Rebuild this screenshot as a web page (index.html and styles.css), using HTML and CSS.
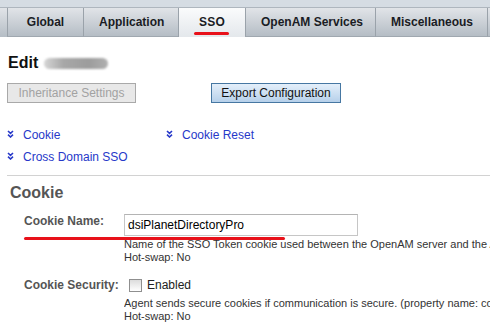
FILE: index.html
```html
<!DOCTYPE html>
<html lang="en">
<head>
    <meta charset="UTF-8">
    <meta name="viewport" content="width=device-width, initial-scale=1.0">
    <title>Edit Realm - SSO</title>
    <link rel="stylesheet" href="styles.css">
</head>
<body>
    <div class="tabbar">
        <ul class="tabs">
            <li class="tab tab-global">Global</li>
            <li class="tab tab-app">Application</li>
            <li class="tab tab-sso selected">SSO<span class="mark-tab"></span></li>
            <li class="tab tab-services">OpenAM Services</li>
            <li class="tab tab-misc">Miscellaneous</li>
            <li class="tab tab-more"></li>
        </ul>
    </div>

    <h1 class="page-title">Edit <span class="blurred"></span></h1>

    <div class="toolbar">
        <button class="btn btn-disabled" disabled>Inheritance Settings</button>
        <button class="btn btn-primary">Export Configuration</button>
    </div>

    <div class="jump-links">
        <a class="jump" href="#cookie">
            <svg width="7" height="8" viewBox="0 0 7 8"><path d="M1 1 L3.5 3.3 L6 1 M1 4.7 L3.5 7 L6 4.7" fill="none" stroke="#2638c9" stroke-width="1.6"/></svg>
            Cookie
        </a>
        <a class="jump" href="#cookie-reset">
            <svg width="7" height="8" viewBox="0 0 7 8"><path d="M1 1 L3.5 3.3 L6 1 M1 4.7 L3.5 7 L6 4.7" fill="none" stroke="#2638c9" stroke-width="1.6"/></svg>
            Cookie Reset
        </a>
        <a class="jump" href="#cdsso">
            <svg width="7" height="8" viewBox="0 0 7 8"><path d="M1 1 L3.5 3.3 L6 1 M1 4.7 L3.5 7 L6 4.7" fill="none" stroke="#2638c9" stroke-width="1.6"/></svg>
            Cross Domain SSO
        </a>
    </div>

    <hr class="divider">

    <div class="section" id="cookie">
        <h2>Cookie</h2>

        <div class="field">
            <label class="field-label" for="cookie-name">Cookie Name:</label>
            <div class="field-control">
                <input class="text-input" type="text" id="cookie-name" value="dsiPlanetDirectoryPro">
                <div class="help">Name of the SSO Token cookie used between the OpenAM server and the Agent. (property name: com.iplanet.am.cookie.name)</div>
                <div class="help">Hot-swap: No</div>
            </div>
            <span class="mark-field"></span>
        </div>

        <div class="field field-check">
            <label class="field-label" for="cookie-secure">Cookie Security:</label>
            <div class="field-control">
                <label class="check">
                    <input type="checkbox" id="cookie-secure"> Enabled
                </label>
                <div class="help">Agent sends secure cookies if communication is secure. (property name: com.iplanet.am.cookie.secure)</div>
                <div class="help">Hot-swap: No</div>
            </div>
        </div>
    </div>
</body>
</html>
```

FILE: styles.css
```css
body {
    margin: 0;
    background-color: #ffffff;
    font-family: 'Liberation Sans', Arial, sans-serif;
    font-size: 12px;
    color: #333333;
    overflow: hidden;
}
.tabbar {
    padding-top: 7px;
    background-color: #d5dce3;
}
.tabs {
    display: flex;
    margin: 0;
    padding: 0 0 0 7px;
    list-style: none;
    height: 30px;
    box-sizing: border-box;
    border-top: 1px solid #aeb6be;
    background: linear-gradient(#e1e4e8, #b5bdc5);
    white-space: nowrap;
    overflow: hidden;
}
.tab {
    position: relative;
    flex-shrink: 0;
    box-sizing: border-box;
    height: 29px;
    line-height: 29px;
    text-align: center;
    font-weight: bold;
    color: #1a1c24;
    border-left: 1px solid #9aa2aa;
    border-bottom: 1px solid #a0a8b0;
    background: linear-gradient(#e1e4e8, #b5bdc5);
    padding: 0 15px;
}
.tab-global { width: 76px; }
.tab-app { width: 95px; }
.tab-sso { width: 67px; }
.tab-services { width: 130px; }
.tab-misc { width: 112px; }
.tab-more { width: 40px; }
.tab.selected {
    background: linear-gradient(#fafbfc, #e3e7eb);
    border-bottom: none;
    height: 30px;
    letter-spacing: 0.3px;
}
.mark-tab {
    position: absolute;
    left: 15px;
    top: 24px;
    width: 35px;
    height: 3px;
    border-radius: 2px;
    background-color: #e8111a;
}
.page-title {
    margin: 17px 0 0 8px;
    font-size: 16px;
    line-height: 18px;
    color: #111111;
}
.blurred {
    display: inline-block;
    vertical-align: -1px;
    width: 64px;
    height: 11px;
    margin-left: 1px;
    border-radius: 6px;
    background: linear-gradient(90deg, #d6d6d6, #a8a8a8 30%, #9c9c9c 70%, #b0b0b0);
    filter: blur(1.2px);
}
.toolbar {
    display: flex;
    gap: 75px;
    margin: 11px 0 0 7px;
}
.btn {
    height: 20px;
    padding: 0 9px;
    font-family: 'Liberation Sans', Arial, sans-serif;
    font-size: 12px;
    border-radius: 0;
}
.btn-disabled {
    width: 129px;
    color: #a2a2a2;
    background-color: #e8e8e8;
    border: 1px solid #a9a9a9;
}
.btn-primary {
    width: 130px;
    color: #111111;
    background: linear-gradient(#e4effa, #b6d0ea);
    border: 1px solid #4677a2;
}
.jump-links {
    display: grid;
    grid-template-columns: 159px auto;
    margin: 21px 0 0 7px;
}
.jump {
    display: flex;
    align-items: center;
    gap: 9px;
    line-height: 22px;
    color: #2638c9;
    text-decoration: none;
}
.jump svg {
    margin-top: -2px;
}
.divider {
    margin: 7px 0 0 7px;
    border: none;
    border-top: 1px solid #d2d2d2;
}
.section h2 {
    margin: 8px 0 0 10px;
    font-size: 16px;
    line-height: 18px;
    color: #555555;
}
.field {
    position: relative;
    display: flex;
    margin-top: 12px;
    white-space: nowrap;
}
.field-check {
    margin-top: 13px;
}
.field-label {
    flex-shrink: 0;
    box-sizing: border-box;
    width: 124px;
    padding-left: 24px;
    font-weight: bold;
    line-height: 14px;
    color: #555555;
}
.field-check .field-label {
    line-height: 16px;
}
.field-control {
    min-width: 0;
    overflow: hidden;
}
.text-input {
    display: block;
    width: 234px;
    height: 22px;
    box-sizing: border-box;
    margin: 0;
    padding: 0 3px;
    font-family: 'Liberation Sans', Arial, sans-serif;
    font-size: 12px;
    color: #000000;
    border: 1px solid #c6c6c6;
    border-top-color: #b4b4b4;
}
.help {
    font-size: 11px;
    line-height: 13px;
    color: #333333;
}
.text-input + .help {
    margin-top: 2px;
}
.mark-field {
    position: absolute;
    left: 24px;
    top: 23px;
    width: 261px;
    height: 3px;
    border-radius: 2px;
    background-color: #e8111a;
}
.check {
    display: flex;
    align-items: center;
    height: 16px;
    margin-bottom: 4px;
    color: #222222;
}
.check input {
    appearance: none;
    width: 13px;
    height: 13px;
    margin: 0 5px 0 5px;
    border: 1px solid #8f8f8f;
    background: linear-gradient(#dcdcdc, #ffffff);
}
```
